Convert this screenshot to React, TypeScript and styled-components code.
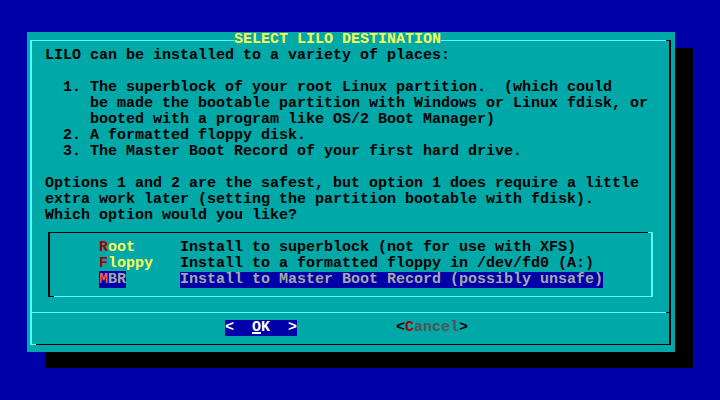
import React from "react";
import styled, { createGlobalStyle } from "styled-components";

const BLUE = "#0000a8";
const TEAL = "#00a8a8";
const LIGHT = "#54fcfc";
const YELLOW = "#fcfc54";
const RED = "#a80000";
const LIGHT_RED = "#fc5454";
const GRAY = "#a8a8a8";
const DARK_GRAY = "#545454";

const GlobalStyle = createGlobalStyle`
  html, body {
    margin: 0;
    padding: 0;
    background: ${BLUE};
  }
  body {
    font-family: "Liberation Mono", "DejaVu Sans Mono", monospace;
    font-size: 15px;
    font-weight: bold;
    line-height: 16px;
  }
`;

const Screen = styled.div`
  width: 720px;
  height: 400px;
  padding: 32px 0 0 27px;
  box-sizing: border-box;
  background: ${BLUE};
  overflow: hidden;
`;

const Dialog = styled.div`
  width: 648px;
  height: 320px;
  box-sizing: border-box;
  padding: 8px 4px 7px 3px;
  background: ${TEAL};
  box-shadow: 18px 16px 0 #000;
  color: #000;
`;

// box-drawing frame; corner stubs take the colour of the vertical side
const Frame = styled.div<{ $sunken?: boolean }>`
  position: relative;
  box-sizing: border-box;
  border-style: solid;
  border-width: 1px 2px;
  border-color: ${(p) =>
    p.$sunken
      ? `#000 ${LIGHT} ${LIGHT} #000`
      : `${LIGHT} #000 #000 ${LIGHT}`};

  &::before {
    content: "";
    position: absolute;
    top: -1px;
    right: -2px;
    width: 5px;
    height: 1px;
    background: ${(p) => (p.$sunken ? LIGHT : "#000")};
  }
  &::after {
    content: "";
    position: absolute;
    bottom: -1px;
    left: -2px;
    width: 6px;
    height: 1px;
    background: ${(p) => (p.$sunken ? "#000" : LIGHT)};
  }
`;

const Title = styled.div`
  position: absolute;
  top: -9px;
  left: 202px;
  background: ${TEAL};
  color: ${YELLOW};
  white-space: pre;
`;

const Body = styled.div`
  padding: 7px 0 15px 13px;
`;

const Text = styled.div`
  white-space: pre;
  height: 176px;
`;

const Menu = styled(Frame)`
  width: 605px;
  margin: 8px 0 0 3px;
  padding: 7px 0 8px 49px;
`;

const Item = styled.div`
  display: flex;
  white-space: pre;
  height: 16px;
`;

const TagCell = styled.div`
  width: 81px;
  flex: none;
`;

const Tag = styled.span<{ $selected?: boolean }>`
  color: ${(p) => (p.$selected ? GRAY : YELLOW)};
  background: ${(p) => (p.$selected ? BLUE : "transparent")};
`;

const Key = styled.span<{ $selected?: boolean }>`
  color: ${(p) => (p.$selected ? LIGHT_RED : RED)};
`;

const Desc = styled.span<{ $selected?: boolean }>`
  color: ${(p) => (p.$selected ? GRAY : "#000")};
  background: ${(p) => (p.$selected ? BLUE : "transparent")};
`;

const Separator = styled.div`
  position: relative;
  height: 1px;
  margin-left: -2px;
  background: ${LIGHT};

  &::after {
    content: "";
    position: absolute;
    right: 0;
    top: 0;
    width: 3px;
    height: 1px;
    background: #000;
  }
`;

const Buttons = styled.div`
  display: flex;
  gap: 99px;
  padding: 7px 0 8px 193px;
  height: 16px;
`;

const Button = styled.span<{ $active?: boolean }>`
  white-space: pre;
  color: ${(p) => (p.$active ? "#fff" : "#000")};
  background: ${(p) => (p.$active ? BLUE : "transparent")};
`;

const ButtonKey = styled.span<{ $active?: boolean }>`
  color: ${(p) => (p.$active ? "#fff" : RED)};
  text-decoration: ${(p) => (p.$active ? "underline" : "none")};
  text-decoration-thickness: 2px;
  text-underline-offset: 1px;
`;

const ButtonLabel = styled.span<{ $active?: boolean }>`
  color: ${(p) => (p.$active ? "#fff" : DARK_GRAY)};
`;

const message = [
  "LILO can be installed to a variety of places:",
  "",
  "  1. The superblock of your root Linux partition.  (which could",
  "     be made the bootable partition with Windows or Linux fdisk, or",
  "     booted with a program like OS/2 Boot Manager)",
  "  2. A formatted floppy disk.",
  "  3. The Master Boot Record of your first hard drive.",
  "",
  "Options 1 and 2 are the safest, but option 1 does require a little",
  "extra work later (setting the partition bootable with fdisk).",
  "Which option would you like?",
].join("\n");

const choices = [
  { tag: "Root", desc: "Install to superblock (not for use with XFS)" },
  { tag: "Floppy", desc: "Install to a formatted floppy in /dev/fd0 (A:)" },
  { tag: "MBR", desc: "Install to Master Boot Record (possibly unsafe)" },
];

const selected = 2;

const App: React.FC = () => {
  return (
    <Screen>
      <GlobalStyle />
      <Dialog>
        <Frame>
          <Title>SELECT LILO DESTINATION</Title>
          <Body>
            <Text>{message}</Text>
            <Menu $sunken>
              {choices.map((c, i) => (
                <Item key={c.tag}>
                  <TagCell>
                    <Tag $selected={i === selected}>
                      <Key $selected={i === selected}>{c.tag[0]}</Key>
                      {c.tag.slice(1)}
                    </Tag>
                  </TagCell>
                  <Desc $selected={i === selected}>{c.desc}</Desc>
                </Item>
              ))}
            </Menu>
          </Body>
          <Separator />
          <Buttons>
            <Button $active>
              {"<  "}
              <ButtonKey $active>O</ButtonKey>
              <ButtonLabel $active>K</ButtonLabel>
              {"  >"}
            </Button>
            <Button>
              {"<"}
              <ButtonKey>C</ButtonKey>
              <ButtonLabel>ancel</ButtonLabel>
              {">"}
            </Button>
          </Buttons>
        </Frame>
      </Dialog>
    </Screen>
  );
};

export default App;
